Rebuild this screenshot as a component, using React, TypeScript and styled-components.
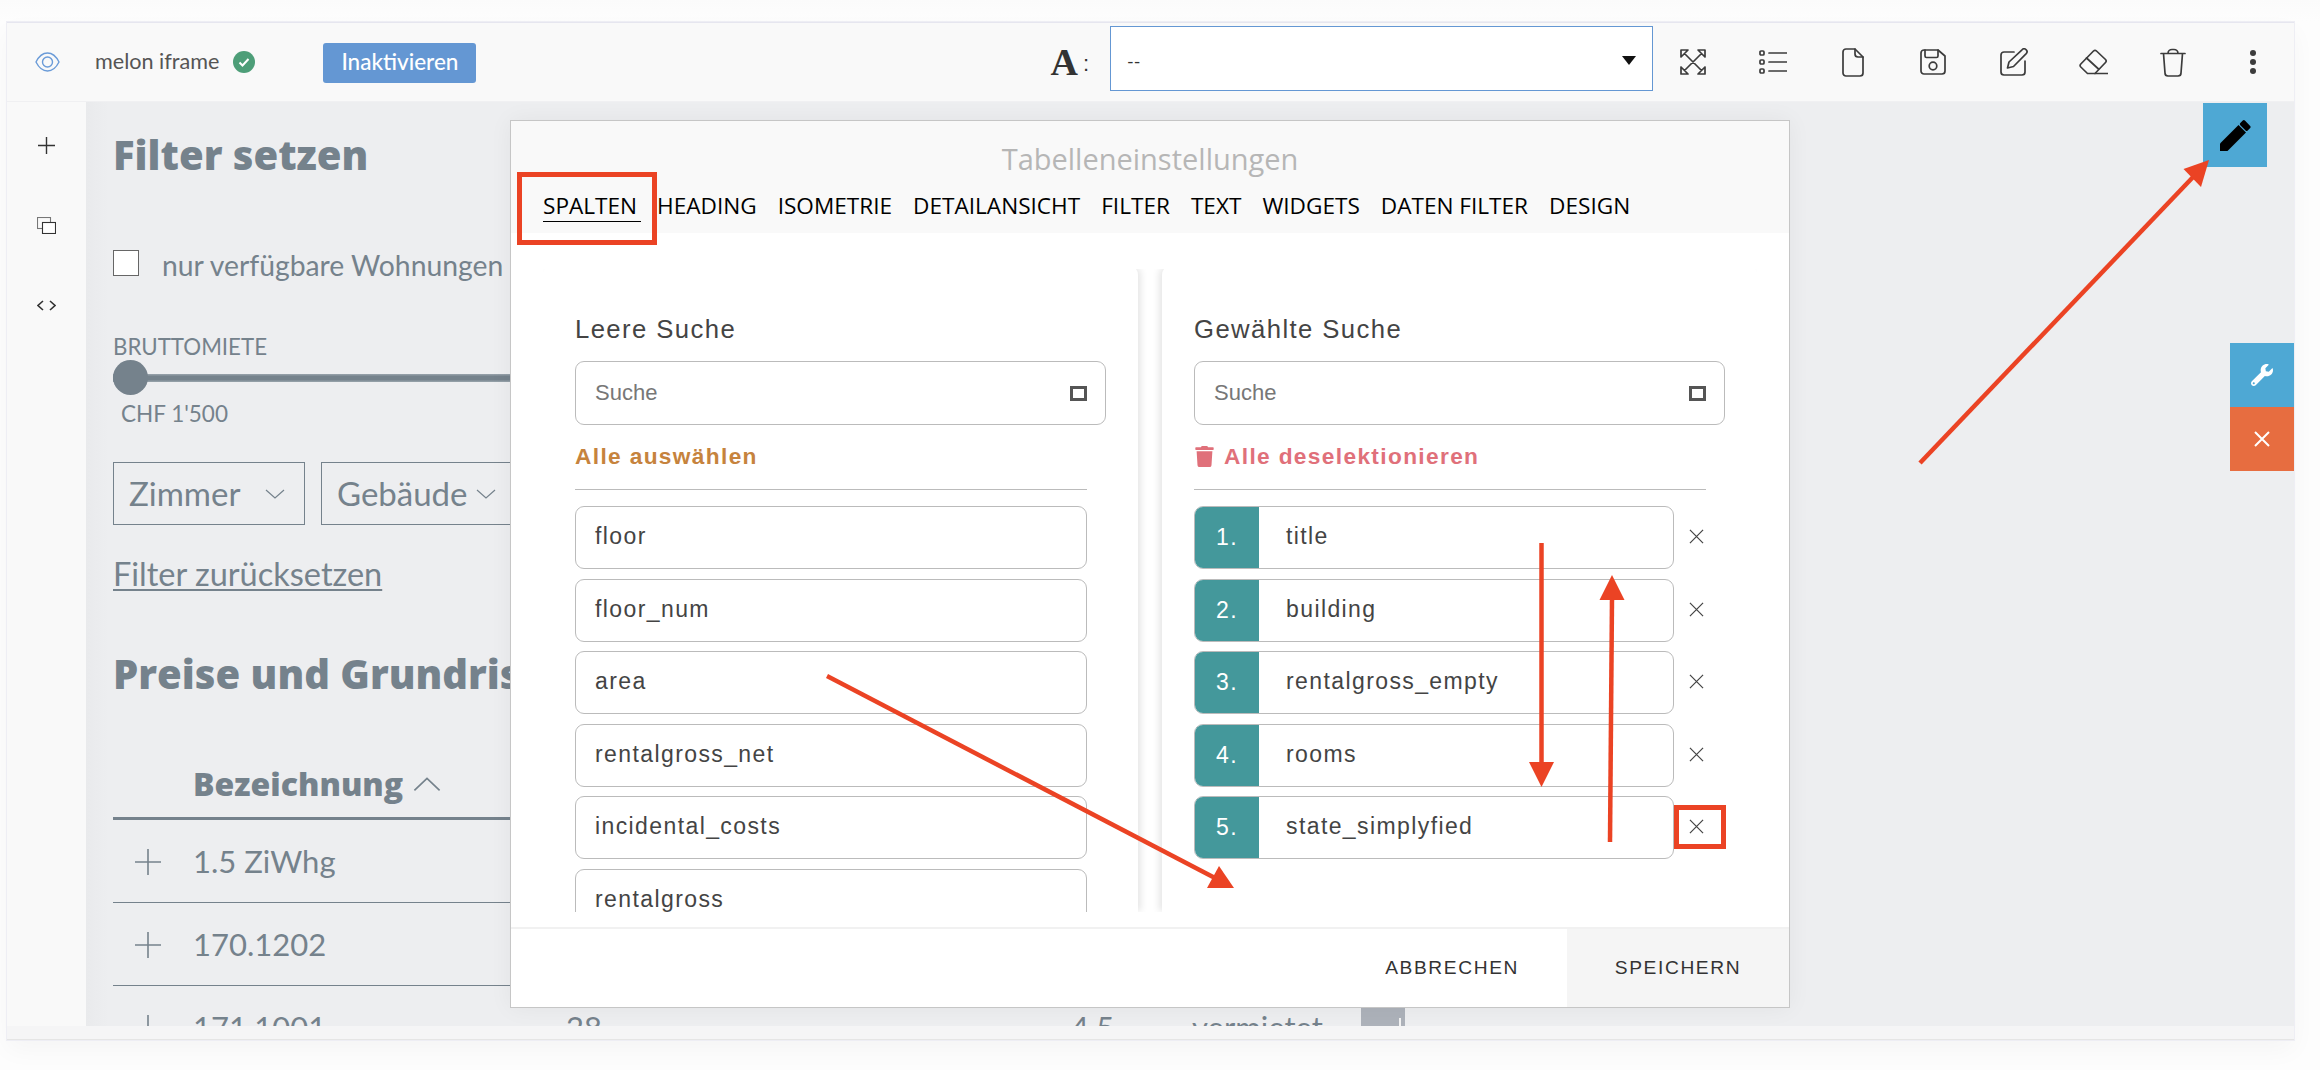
import React from 'react';
import styled, { createGlobalStyle } from 'styled-components';
import { FaTrash, FaWrench } from 'react-icons/fa';

const Global = createGlobalStyle`
  html, body { margin: 0; padding: 0; background: #ffffff; }
  * { box-sizing: border-box; }
  #root { width: 2320px; height: 1070px; overflow: hidden; }
`;

const slate = '#75828c';
const red = '#eb4324';

const Page = styled.div`
  position: relative;
  width: 2320px;
  height: 1070px;
  padding: 22px 26px 0 7px;
  background: linear-gradient(#fbfbfb, #fdfdfd 22px, #fdfdfd);
  overflow: hidden;
`;
const Window = styled.div`
  position: relative;
  display: flex;
  flex-direction: column;
  width: 2287px;
  height: 1018px;
  background: #f9f9f9;
  border-top: 1px solid #e6e6ef;
  border-bottom: 1px solid #e5e5e5;
  box-shadow: 0 0 0 1px #eeeef4, 0 10px 24px rgba(0, 0, 0, 0.035);
`;
const Toolbar = styled.header`
  display: flex;
  align-items: center;
  flex: none;
  height: 79px;
  background: #f9f9f9;
  border-bottom: 1px solid #f0f0f2;
`;
const EyeBox = styled.span`
  display: flex;
  margin-left: 28px;
  width: 25px;
`;
const SiteName = styled.span`
  margin-left: 35px;
  font: 400 21.6px/1 Lato, sans-serif;
  color: #555;
`;
const StatusDot = styled.span`
  display: flex;
  margin-left: 14px;
`;
const ActivateButton = styled.button`
  margin: 1px 0 0 68px;
  width: 153px;
  height: 40px;
  border: 0;
  border-radius: 3px;
  background: #6497d3;
  color: #fff;
  font: 500 22.5px/1 Lato, sans-serif;
  padding: 0;
`;
const FontPicker = styled.div`
  display: flex;
  align-items: center;
  margin-left: auto;
`;
const FontGlyph = styled.span`
  font: 700 38px/1 'Liberation Serif', serif;
  color: #333;
`;
const Colon = styled.span`
  margin: 4px 21px 0 5px;
  font: 400 22px/1 'Liberation Sans', sans-serif;
  color: #333;
`;
const SelectBox = styled.div`
  position: relative;
  display: flex;
  align-items: center;
  width: 543px;
  height: 65px;
  margin-top: -8px;
  padding: 5px 16px 0;
  background: #fff;
  border: 1px solid #6497d3;
  font: 400 18px/1 Lato, sans-serif;
  color: #333;
`;
const Caret = styled.span`
  margin-left: auto;
  width: 0;
  height: 0;
  border-left: 7.5px solid transparent;
  border-right: 7.5px solid transparent;
  border-top: 9px solid #111;
`;
const ToolIcons = styled.div`
  display: flex;
  margin-right: 1px;
`;
const ToolCell = styled.span`
  display: flex;
  align-items: center;
  justify-content: center;
  width: 80px;
  height: 40px;
  svg {
    fill: none;
    stroke: #3c3c3c;
    stroke-width: 1.7;
    stroke-linejoin: round;
    stroke-linecap: round;
  }
`;
const Body = styled.div`
  display: flex;
  flex: none;
  height: 924px;
`;
const Sidebar = styled.aside`
  display: flex;
  flex-direction: column;
  align-items: center;
  flex: none;
  width: 79px;
  padding-top: 34px;
  background: #f9f9f9;
`;
const SideIcon = styled.span`
  display: flex;
  align-items: center;
  justify-content: center;
  height: 18px;
  margin-bottom: 62px;
`;
const Main = styled.main`
  flex: 1;
  overflow: hidden;
  padding-left: 27px;
  background: linear-gradient(90deg, #e9eaec, #edeef0 22px);
  color: ${slate};
`;
const FilterTitle = styled.h1`
  margin: 30px 0 72px;
  font: 800 40px/46px 'Open Sans', sans-serif;
  color: ${slate};
`;
const CheckRow = styled.label`
  display: flex;
  align-items: center;
  gap: 23px;
  height: 26px;
  font: 400 28.3px/26px Lato, sans-serif;
  white-space: nowrap;
`;
const CheckText = styled.span`
  padding-top: 3px;
`;
const CheckBox = styled.span`
  width: 26px;
  height: 26px;
  background: #fff;
  border: 1px solid #666;
`;
const SliderLabel = styled.div`
  margin-top: 59px;
  font: 400 22.3px/24px Lato, sans-serif;
`;
const SliderTrack = styled.div`
  position: relative;
  display: flex;
  align-items: center;
  width: 1000px;
  height: 35px;
  margin-top: 1px;
  &::before {
    content: '';
    width: 100%;
    height: 8px;
    background: linear-gradient(#9aa5ad, ${slate} 30%, ${slate} 70%, #9aa5ad);
  }
`;
const SliderKnob = styled.span`
  position: absolute;
  left: 0;
  top: 0;
  width: 35px;
  height: 35px;
  border-radius: 50%;
  background: ${slate};
`;
const SliderValue = styled.div`
  margin: 4px 0 33px 8px;
  font: 400 22.5px/30px Lato, sans-serif;
`;
const DropRow = styled.div`
  display: flex;
  gap: 16px;
`;
const Drop = styled.div<{ $w: number; $gap: number }>`
  display: flex;
  align-items: center;
  justify-content: space-between;
  width: ${(p) => p.$w}px;
  height: 63px;
  padding: 0 ${(p) => p.$gap}px 0 15px;
  border: 1px solid ${slate};
  font: 400 33px/1 Lato, sans-serif;
`;
const ResetLink = styled.div`
  margin-top: 29px;
  font: 400 32.5px/40px Lato, sans-serif;
  text-decoration: underline;
  text-underline-offset: 3px;
  text-decoration-thickness: 1.5px;
`;
const PriceTitle = styled.h2`
  margin: 57px 0 0;
  font: 800 40px/46px 'Open Sans', sans-serif;
  white-space: nowrap;
  color: ${slate};
`;
const TableHead = styled.div`
  display: flex;
  align-items: center;
  gap: 10px;
  width: 1400px;
  height: 123px;
  padding: 53px 0 0 80px;
  border-bottom: 3px solid ${slate};
  font: 800 32px/1 'Open Sans', sans-serif;
`;
const TableRow = styled.div`
  display: grid;
  grid-template-columns: 80px 373px 505px 121px 169px 44px;
  align-items: center;
  width: 1400px;
  height: 83px;
  padding-top: 1px;
  border-bottom: 1px solid ${slate};
  font: 400 31px/1 Lato, sans-serif;
`;
const PlusCell = styled.span`
  display: flex;
  padding-left: 22px;
`;
const ThumbCell = styled.span`
  position: relative;
  display: block;
  height: 60px;
  background: #adb2ba;
  &::after {
    content: '';
    position: absolute;
    right: 4px;
    top: 20px;
    width: 2px;
    height: 40px;
    background: #f3f3f3;
  }
`;
const FooterStrip = styled.div`
  flex: 1;
  background: #f5f5f6;
`;
const FloatButton = styled.button<{ $bg: string; $top: number; $right: number }>`
  position: absolute;
  top: ${(p) => p.$top}px;
  right: ${(p) => p.$right}px;
  display: flex;
  align-items: center;
  justify-content: center;
  width: 64px;
  height: 64px;
  padding: 0;
  border: 0;
  background: ${(p) => p.$bg};
  color: #fff;
`;
const Modal = styled.section`
  position: absolute;
  left: 503px;
  top: 97px;
  display: flex;
  flex-direction: column;
  width: 1280px;
  height: 888px;
  background: #fff;
  border: 1px solid #c6c6c6;
  box-shadow: 0 0 22px rgba(0, 0, 0, 0.05);
`;
const ModalHead = styled.div`
  flex: none;
  height: 112px;
  background: #f9f9f9;
`;
const ModalTitle = styled.div`
  padding-top: 19px;
  text-align: center;
  font: 400 29px/37px 'Open Sans', sans-serif;
  color: #b6b6b6;
`;
const Tabs = styled.nav`
  display: flex;
  gap: 21px;
  margin-top: 16px;
  padding-left: 32px;
`;
const Tab = styled.span<{ $active?: boolean }>`
  height: 29px;
  min-width: ${(p) => (p.$active ? '98px' : '0')};
  margin-right: ${(p) => (p.$active ? '-5px' : '0')};
  border-bottom: ${(p) => (p.$active ? '1px solid #000' : '0')};
  font: 400 22.6px/26px 'Open Sans', sans-serif;
  color: #000;
  white-space: nowrap;
`;
const Panels = styled.div`
  display: grid;
  flex: none;
  grid-template-columns: 595px 595px;
  column-gap: 24px;
  height: 647px;
  margin: 32px 0 15px 32px;
`;
const Panel = styled.div<{ $side: 'left' | 'right' }>`
  overflow: hidden;
  padding: 0 0 0 32px;
  border-radius: 10px 10px 0 0;
  background: #fff;
  box-shadow: ${(p) => (p.$side === 'left' ? '4px' : '-4px')} 0 7px -1px rgba(0, 0, 0, 0.1);
  clip-path: ${(p) => (p.$side === 'left' ? 'inset(4px -14px 0 0)' : 'inset(4px 0 0 -14px)')};
`;
const PanelTitle = styled.div`
  margin-top: 48px;
  font: 400 25.7px/32px 'Liberation Sans', sans-serif;
  letter-spacing: 1.4px;
  color: #444;
`;
const SearchBox = styled.div`
  display: flex;
  align-items: center;
  justify-content: space-between;
  width: 531px;
  height: 64px;
  margin-top: 16px;
  padding: 0 18px 0 19px;
  border: 1px solid #bbb;
  border-radius: 9px;
  font: 400 22px/1 'Liberation Sans', sans-serif;
  color: #777;
`;
const SearchSquare = styled.span`
  width: 17px;
  height: 15px;
  border: 3px solid #555;
`;
const SelectAll = styled.div<{ $color: string }>`
  display: flex;
  align-items: center;
  gap: 9px;
  height: 24px;
  margin-top: 19px;
  font: 700 22.7px/24px 'Liberation Sans', sans-serif;
  letter-spacing: 1.35px;
  color: ${(p) => p.$color};
`;
const Rule = styled.div`
  width: 512px;
  height: 1px;
  margin: 21px 0 16px;
  background: #bbb;
`;
const ItemList = styled.div`
  display: flex;
  flex-direction: column;
  gap: 9.5px;
`;
const FieldItem = styled.div`
  display: flex;
  align-items: center;
  flex: none;
  width: 512px;
  height: 63px;
  padding: 0 0 2px 19px;
  border: 1px solid #bbb;
  border-radius: 9px;
  font: 400 23px/1 'Liberation Sans', sans-serif;
  letter-spacing: 1.4px;
  color: #444;
`;
const PickedRow = styled.div`
  display: flex;
  align-items: center;
  flex: none;
  height: 63px;
`;
const PickedItem = styled.div`
  display: flex;
  align-items: center;
  width: 480px;
  height: 63px;
  padding-bottom: 2px;
  overflow: hidden;
  border: 1px solid #bbb;
  border-radius: 9px;
  font: 400 23px/1 'Liberation Sans', sans-serif;
  letter-spacing: 1.4px;
  color: #444;
`;
const PickedNumber = styled.span`
  display: flex;
  align-items: center;
  justify-content: center;
  align-self: stretch;
  flex: none;
  width: 64px;
  margin: 0 27px -2px 0;
  background: #44989b;
  color: #fff;
`;
const RemoveIcon = styled.span`
  display: flex;
  margin: -2px 0 0 15px;
`;
const ModalFoot = styled.div`
  display: flex;
  align-items: center;
  justify-content: flex-end;
  flex: 1;
  border-top: 2px solid #f1f1f1;
`;
const FootButton = styled.button<{ $filled?: boolean }>`
  align-self: stretch;
  width: ${(p) => (p.$filled ? '222px' : 'auto')};
  padding: 0;
  margin-right: ${(p) => (p.$filled ? '0' : '48px')};
  border: 0;
  background: ${(p) => (p.$filled ? '#f5f5f5' : '#fff')};
  font: 400 19.2px/1 'Liberation Sans', sans-serif;
  letter-spacing: 1.6px;
  color: #333;
`;
const Highlight = styled.div<{ $x: number; $y: number; $w: number; $h: number }>`
  position: absolute;
  left: ${(p) => p.$x}px;
  top: ${(p) => p.$y}px;
  width: ${(p) => p.$w}px;
  height: ${(p) => p.$h}px;
  border: 5px solid ${red};
`;
const ArrowLayer = styled.svg`
  position: absolute;
  left: 0;
  top: 0;
  pointer-events: none;
`;

const Chevron = ({ up, size = 20 }: { up?: boolean; size?: number }) => (
  <svg width={size} height={size / 2} viewBox="0 0 20 10" fill="none" stroke={slate} strokeWidth={1.2}>
    <path d={up ? 'M1 9.5 10 1l9 8.5' : 'M1 1l9 8 9-8'} />
  </svg>
);
const Plus = () => (
  <svg width="26" height="26" viewBox="0 0 26 26" stroke={slate} strokeWidth={1.6}>
    <path d="M13 0v26M0 13h26" />
  </svg>
);
const Cross = ({ size, color, width }: { size: number; color: string; width: number }) => (
  <svg width={size} height={size} viewBox="0 0 16 16" stroke={color} strokeWidth={width} fill="none">
    <path d="M1 1l14 14M15 1L1 15" />
  </svg>
);

const leftFields = ['floor', 'floor_num', 'area', 'rentalgross_net', 'incidental_costs', 'rentalgross', 'status'];
const rightFields = ['title', 'building', 'rentalgross_empty', 'rooms', 'state_simplyfied'];
const tabs = ['HEADING', 'ISOMETRIE', 'DETAILANSICHT', 'FILTER', 'TEXT', 'WIDGETS', 'DATEN FILTER', 'DESIGN'];

export default function App() {
  return (
    <Page>
      <Global />
      <Window>
        <Toolbar>
          <EyeBox>
            <svg width="25" height="20" viewBox="0 0 25 20" fill="none" stroke="#6a9bd8" strokeWidth="1.4">
              <path d="M1 10C4 4 8 1 12.5 1S21 4 24 10c-3 6-7 9-11.500 9S4 16 1 10Z" />
              <circle cx="12.500" cy="10" r="5" />
            </svg>
          </EyeBox>
          <SiteName>melon iframe</SiteName>
          <StatusDot>
            <svg width="22" height="22" viewBox="0 0 22 22">
              <circle cx="11" cy="11" r="11" fill="#4d9e78" />
              <path d="M6.500 11.500l3 3 6-6.500" fill="none" stroke="#fff" strokeWidth="2" />
            </svg>
          </StatusDot>
          <ActivateButton>Inaktivieren</ActivateButton>
          <FontPicker>
            <FontGlyph>A</FontGlyph>
            <Colon>:</Colon>
            <SelectBox>
              --
              <Caret />
            </SelectBox>
          </FontPicker>
          <ToolIcons>
            <ToolCell>
              <svg width="26" height="26" viewBox="0 0 26 26">
                <path d="M1 8V1h7zM25 8V1h-7zM1 18v7h7zM25 18v7h-7zM4.500 4.500l17 17M21.500 4.500l-17 17" />
              </svg>
            </ToolCell>
            <ToolCell>
              <svg width="28" height="24" viewBox="0 0 28 24">
                <path d="M10 3h18M10 12h18M10 21h18" />
                <rect x="1" y="1" width="4" height="4" rx="1" />
                <rect x="1" y="10" width="4" height="4" rx="1" />
                <rect x="1" y="19" width="4" height="4" rx="1" />
              </svg>
            </ToolCell>
            <ToolCell>
              <svg width="22" height="29" viewBox="0 0 22 29">
                <path d="M4 1h9l8 8v16a3 3 0 0 1-3 3H4a3 3 0 0 1-3-3V4a3 3 0 0 1 3-3Z" />
                <path d="M13 1v5a3 3 0 0 0 3 3h5" />
              </svg>
            </ToolCell>
            <ToolCell>
              <svg width="26" height="26" viewBox="0 0 26 26">
                <path d="M4 1h14l7 6v15a3 3 0 0 1-3 3H4a3 3 0 0 1-3-3V4a3 3 0 0 1 3-3Z" />
                <path d="M5 1v6a1.500 1.500 0 0 0 1.500 1.500h10A1.500 1.500 0 0 0 18 7V1" />
                <circle cx="13" cy="17" r="3.800" />
              </svg>
            </ToolCell>
            <ToolCell>
              <svg width="29" height="28" viewBox="0 0 29 28">
                <path d="M15 4H5a3 3 0 0 0-3 3v17a3 3 0 0 0 3 3h18a3 3 0 0 0 3-3V13" />
                <path d="M8.500 20 10 14 23 1.800a2.800 2.800 0 0 1 4.200 3.800L14.500 18.500Z" />
              </svg>
            </ToolCell>
            <ToolCell>
              <svg width="29" height="26" viewBox="0 0 29 26">
                <path d="M1.800 15 14.500 2a2.200 2.200 0 0 1 3 0L26.500 10.500a2.200 2.200 0 0 1 0 3L16 24.500H8.500L1.800 18a2.200 2.200 0 0 1 0-3Z" />
                <path d="M7.500 9l12 11M16 24.500h12.500" />
              </svg>
            </ToolCell>
            <ToolCell>
              <svg width="26" height="29" viewBox="0 0 26 29">
                <path d="M1 5.500h24M8 5.500a4 4 0 0 1 4-4h2a4 4 0 0 1 4 4M3.500 5.500 5 25a3 3 0 0 0 3 3h10a3 3 0 0 0 3-3l1.500-19.500" />
              </svg>
            </ToolCell>
            <ToolCell>
              <svg width="8" height="26" viewBox="0 0 8 26" style={{ fill: '#3c3c3c', stroke: 'none' }}>
                <circle cx="4" cy="4" r="3" />
                <circle cx="4" cy="13" r="3" />
                <circle cx="4" cy="22" r="3" />
              </svg>
            </ToolCell>
          </ToolIcons>
        </Toolbar>
        <Body>
          <Sidebar>
            <SideIcon>
              <svg width="17" height="17" viewBox="0 0 17 17" stroke="#333" strokeWidth="1.4">
                <path d="M8.500 0v17M0 8.500h17" />
              </svg>
            </SideIcon>
            <SideIcon>
              <svg width="19" height="17" viewBox="0 0 19 17" fill="none" stroke="#333" strokeWidth="1.100">
                <rect x="0.500" y="0.500" width="13" height="11" stroke="#777" />
                <rect x="5.500" y="5.500" width="13" height="11" fill="#fff" />
              </svg>
            </SideIcon>
            <SideIcon>
              <svg width="19" height="11" viewBox="0 0 19 11" fill="none" stroke="#333" strokeWidth="1.600">
                <path d="M6 1 1 5.500 6 10M13 1l5 4.500L13 10" />
              </svg>
            </SideIcon>
          </Sidebar>
          <Main>
            <FilterTitle>Filter setzen</FilterTitle>
            <CheckRow>
              <CheckBox />
              <CheckText>nur verfügbare Wohnungen</CheckText>
            </CheckRow>
            <SliderLabel>BRUTTOMIETE</SliderLabel>
            <SliderTrack>
              <SliderKnob />
            </SliderTrack>
            <SliderValue>CHF 1'500</SliderValue>
            <DropRow>
              <Drop $w={192} $gap={19}>
                Zimmer
                <Chevron />
              </Drop>
              <Drop $w={192} $gap={16}>
                Gebäude
                <Chevron />
              </Drop>
            </DropRow>
            <ResetLink>Filter zurücksetzen</ResetLink>
            <PriceTitle>Preise und Grundrisse</PriceTitle>
            <TableHead>
              Bezeichnung
              <Chevron up size={28} />
            </TableHead>
            <TableRow>
              <PlusCell><Plus /></PlusCell>
              <span>1.5 ZiWhg</span>
            </TableRow>
            <TableRow>
              <PlusCell><Plus /></PlusCell>
              <span>170.1202</span>
            </TableRow>
            <TableRow>
              <PlusCell><Plus /></PlusCell>
              <span>171.1001</span>
              <span>28</span>
              <span>4.5</span>
              <span>vermietet</span>
              <ThumbCell />
            </TableRow>
          </Main>
        </Body>
        <FooterStrip />
        <FloatButton $bg="#4ea8d4" $top={80} $right={27}>
          <svg width="33" height="33" viewBox="0 0 33 33" fill="#000">
            <path d="M1 32v-7.500L19.500 6l7.500 7.500L8.500 32Z" />
            <rect x="21" y="3.300" width="10.500" height="6.500" rx="1.500" transform="rotate(45 26.250 6.550)" />
          </svg>
        </FloatButton>
        <FloatButton $bg="#4ea8d4" $top={320} $right={0}>
          <FaWrench size={22} />
        </FloatButton>
        <FloatButton $bg="#e76d40" $top={384} $right={0}>
          <Cross size={16} color="#fff" width={2} />
        </FloatButton>
        <Modal>
          <ModalHead>
            <ModalTitle>Tabelleneinstellungen</ModalTitle>
            <Tabs>
              <Tab $active>SPALTEN</Tab>
              {tabs.map((t) => (
                <Tab key={t}>{t}</Tab>
              ))}
            </Tabs>
          </ModalHead>
          <Panels>
            <Panel $side="left">
              <PanelTitle>Leere Suche</PanelTitle>
              <SearchBox>
                Suche
                <SearchSquare />
              </SearchBox>
              <SelectAll $color="#c6833d">Alle auswählen</SelectAll>
              <Rule />
              <ItemList>
                {leftFields.map((f) => (
                  <FieldItem key={f}>{f}</FieldItem>
                ))}
              </ItemList>
            </Panel>
            <Panel $side="right">
              <PanelTitle>Gewählte Suche</PanelTitle>
              <SearchBox>
                Suche
                <SearchSquare />
              </SearchBox>
              <SelectAll $color="#e0707a">
                <FaTrash size={21} />
                Alle deselektionieren
              </SelectAll>
              <Rule />
              <ItemList>
                {rightFields.map((f, i) => (
                  <PickedRow key={f}>
                    <PickedItem>
                      <PickedNumber>{i + 1}.</PickedNumber>
                      {f}
                    </PickedItem>
                    <RemoveIcon>
                      <Cross size={15} color="#444" width={1.300} />
                    </RemoveIcon>
                  </PickedRow>
                ))}
              </ItemList>
            </Panel>
          </Panels>
          <ModalFoot>
            <FootButton>ABBRECHEN</FootButton>
            <FootButton $filled>SPEICHERN</FootButton>
          </ModalFoot>
        </Modal>
      </Window>
      <Highlight $x={517} $y={172} $w={140} $h={73} />
      <Highlight $x={1674} $y={805} $w={52} $h={44} />
      <ArrowLayer width="2320" height="1070" viewBox="0 0 2320 1070">
        <g stroke={red} strokeWidth="4.500" fill="none">
          <path d="M1920 463 2195 175" />
          <path d="M827 676 1215 878" />
          <path d="M1541.500 543V765" />
          <path d="M1610 842 1612 598" />
        </g>
        <g fill={red}>
          <polygon points="2209,160 2183.500,169 2201,187" />
          <polygon points="1234,888 1219,866 1207,888" />
          <polygon points="1541.500,787 1529,762 1554,762" />
          <polygon points="1612,575 1599.500,600 1624.500,600" />
        </g>
      </ArrowLayer>
    </Page>
  );
}
